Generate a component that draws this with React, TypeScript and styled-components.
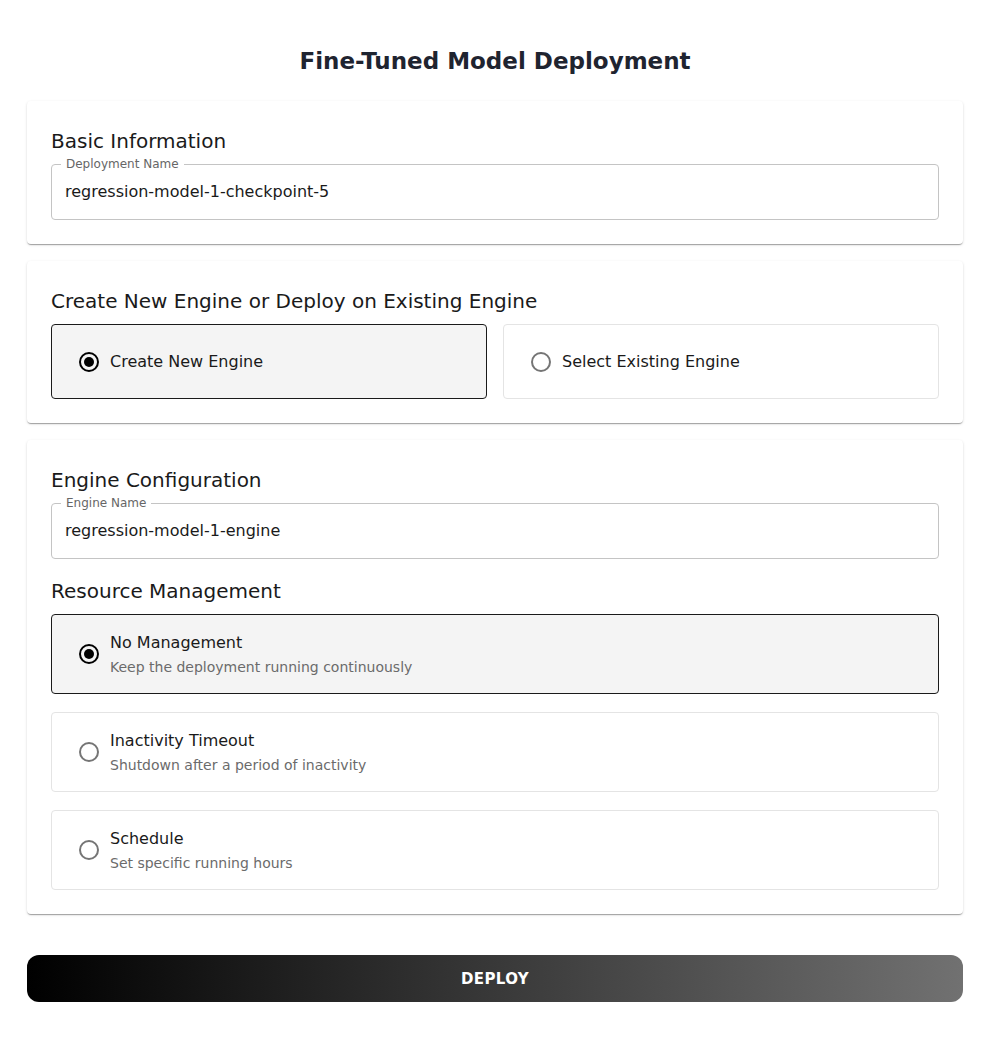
import React, { useState } from "react";
import styled, { createGlobalStyle } from "styled-components";

const FONT = `"DejaVu Sans", "Open Sans", sans-serif`;

const Global = createGlobalStyle`
  * { box-sizing: border-box; }
  body {
    margin: 0;
    background: #ffffff;
    font-family: ${FONT};
    color: #1a1a1a;
  }
`;

const Page = styled.div`
  padding: 41px 27px 38px;
  display: flex;
  flex-direction: column;
`;

const Title = styled.h1`
  margin: 0 0 20px;
  font-size: 23px;
  line-height: 40px;
  font-weight: 700;
  text-align: center;
  color: #1f2430;
`;

const Cards = styled.div`
  display: flex;
  flex-direction: column;
  gap: 17px;
`;

const Card = styled.section`
  background: #fff;
  border-radius: 4px;
  padding: 24px;
  box-shadow: 0px 2px 1px -1px rgba(0, 0, 0, 0.2), 0px 1px 1px 0px rgba(0, 0, 0, 0.14),
    0px 1px 3px 0px rgba(0, 0, 0, 0.12);
  display: flex;
  flex-direction: column;
`;

const SectionTitle = styled.h2<{ $top?: number }>`
  margin: ${(p) => p.$top ?? 0}px 0 7px;
  font-size: 20px;
  line-height: 32px;
  font-weight: 400;
  color: #1a1a1a;
`;

const Field = styled.div`
  height: 56px;
  padding: 0 13px;
  border: 1px solid #c4c4c4;
  border-radius: 4px;
  position: relative;
  display: flex;
  align-items: center;
`;

const FieldLabel = styled.span`
  position: absolute;
  top: -8px;
  left: 9px;
  padding: 0 5px;
  background: #fff;
  font-size: 12px;
  line-height: 15px;
  color: #666;
`;

const FieldInput = styled.input`
  border: 0;
  outline: none;
  width: 100%;
  font-family: ${FONT};
  font-size: 16px;
  line-height: 24px;
  color: #1a1a1a;
  background: transparent;
  padding: 0;
`;

const OptionGrid = styled.div<{ $cols: number }>`
  display: grid;
  grid-template-columns: repeat(${(p) => p.$cols}, 1fr);
  gap: ${(p) => (p.$cols > 1 ? "16px" : "18px")};
`;

const Option = styled.label<{ $selected: boolean; $height: number }>`
  display: flex;
  align-items: center;
  height: ${(p) => p.$height}px;
  padding: 0 16px 0 27px;
  border-radius: 4px;
  border: 1px solid ${(p) => (p.$selected ? "#1a1a1a" : "#e4e4e4")};
  background: ${(p) => (p.$selected ? "#f4f4f4" : "#fff")};
  cursor: pointer;
  gap: 11px;
`;

const RadioCircle = styled.span<{ $checked: boolean }>`
  flex: none;
  width: 20px;
  height: 20px;
  border-radius: 50%;
  border: 2px solid ${(p) => (p.$checked ? "#000" : "#757575")};
  display: flex;
  align-items: center;
  justify-content: center;
  &::after {
    content: "";
    width: 10px;
    height: 10px;
    border-radius: 50%;
    background: #000;
    display: ${(p) => (p.$checked ? "block" : "none")};
  }
`;

const OptionText = styled.span`
  display: flex;
  flex-direction: column;
  gap: 2px;
`;

const OptionLabel = styled.span`
  font-size: 16px;
  line-height: 24px;
  color: #1a1a1a;
`;

const OptionDesc = styled.span`
  font-size: 14px;
  line-height: 20px;
  color: #6b6b6b;
`;

const DeployButton = styled.button`
  margin-top: 41px;
  height: 47px;
  border: 0;
  border-radius: 12px;
  background: linear-gradient(90deg, #000000 0%, #717171 100%);
  color: #fff;
  font-family: ${FONT};
  font-size: 15px;
  font-weight: 700;
  letter-spacing: 0.4px;
  cursor: pointer;
`;

const engineOptions = [
  { id: "new", label: "Create New Engine" },
  { id: "existing", label: "Select Existing Engine" },
];

const resourceOptions = [
  { id: "none", label: "No Management", desc: "Keep the deployment running continuously" },
  { id: "timeout", label: "Inactivity Timeout", desc: "Shutdown after a period of inactivity" },
  { id: "schedule", label: "Schedule", desc: "Set specific running hours" },
];

export default function App() {
  const [deployName, setDeployName] = useState("regression-model-1-checkpoint-5");
  const [engineName, setEngineName] = useState("regression-model-1-engine");
  const [engine, setEngine] = useState("new");
  const [resource, setResource] = useState("none");

  return (
    <>
      <Global />
      <Page>
        <Title>Fine-Tuned Model Deployment</Title>
        <Cards>
          <Card>
            <SectionTitle>Basic Information</SectionTitle>
            <Field>
              <FieldLabel>Deployment Name</FieldLabel>
              <FieldInput value={deployName} onChange={(e) => setDeployName(e.target.value)} />
            </Field>
          </Card>

          <Card>
            <SectionTitle>Create New Engine or Deploy on Existing Engine</SectionTitle>
            <OptionGrid $cols={2}>
              {engineOptions.map((o) => (
                <Option
                  key={o.id}
                  $selected={engine === o.id}
                  $height={75}
                  onClick={() => setEngine(o.id)}
                >
                  <RadioCircle $checked={engine === o.id} />
                  <OptionLabel>{o.label}</OptionLabel>
                </Option>
              ))}
            </OptionGrid>
          </Card>

          <Card>
            <SectionTitle>Engine Configuration</SectionTitle>
            <Field>
              <FieldLabel>Engine Name</FieldLabel>
              <FieldInput value={engineName} onChange={(e) => setEngineName(e.target.value)} />
            </Field>
            <SectionTitle $top={16}>Resource Management</SectionTitle>
            <OptionGrid $cols={1}>
              {resourceOptions.map((o) => (
                <Option
                  key={o.id}
                  $selected={resource === o.id}
                  $height={80}
                  onClick={() => setResource(o.id)}
                >
                  <RadioCircle $checked={resource === o.id} />
                  <OptionText>
                    <OptionLabel>{o.label}</OptionLabel>
                    <OptionDesc>{o.desc}</OptionDesc>
                  </OptionText>
                </Option>
              ))}
            </OptionGrid>
          </Card>
        </Cards>
        <DeployButton>DEPLOY</DeployButton>
      </Page>
    </>
  );
}
